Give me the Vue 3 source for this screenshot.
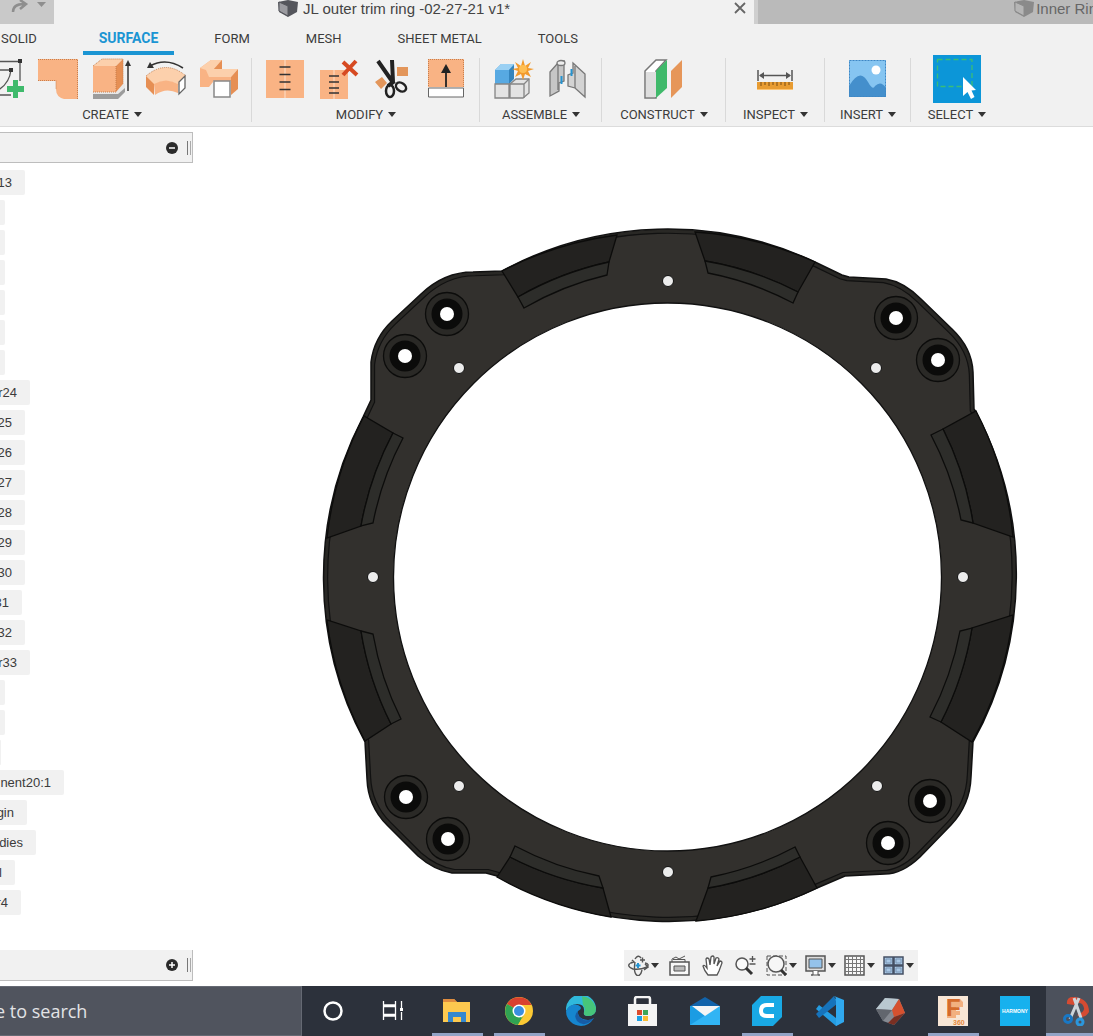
<script setup>
const menus = ['SOLID', 'SURFACE', 'FORM', 'MESH', 'SHEET METAL', 'TOOLS']

const groups = [
  { name: 'CREATE', icons: ['sketch', 'patch', 'extrude', 'revolve', 'loft'] },
  { name: 'MODIFY', icons: ['stitch', 'unstitch', 'trim', 'extend'] },
  { name: 'ASSEMBLE', icons: ['component', 'joint'] },
  { name: 'CONSTRUCT', icons: ['plane'] },
  { name: 'INSPECT', icons: ['measure'] },
  { name: 'INSERT', icons: ['picture'] },
  { name: 'SELECT', icons: ['select'] },
]

const toolIcons = {
  sketch: '<g fill="none" stroke="#555" stroke-width="1.3"><path d="M10 2.500H36V22M10 36H27M12 11H27Q25 27 10 33"/></g><path d="M34 0h4v4h-4zM25 9h4v4h-4z" fill="#333"/><path d="M29 21h5v6h6v6h-6v6h-5v-6h-6v-6h6z" fill="#3fba6c"/>',
  patch: '<path d="M0 0H40V40H26Q18 38 18 30V22H0Z" fill="#f9b384"/><path d="M0 .5H39.500V40M0 21.500H18V30" fill="none" stroke="#c87f4d" stroke-dasharray="1 1"/>',
  extrude: '<path d="M1 34v6h25l7-7v-6l-7 7z" fill="#9c9c9c"/><path d="M1 31v4h25l7-6v-4z" fill="#e8e8e8"/><path d="M1 7H24V33H1z" fill="#f9b384"/><path d="M1 7L10 0H31L24 7z" fill="#fcd0ac"/><path d="M24 7L31 0V25L24 33z" fill="#e68f54"/><path d="M24 7V33H1M1 7L10 0H31V25" fill="none" stroke="#c87f4d" stroke-dasharray="1 1"/><path d="M36 32V4" stroke="#333" stroke-width="1.500"/><path d="M33 7L36 1L39 7z" fill="#333"/>',
  revolve: '<path d="M0 17Q20 0 40 17L33 26Q20 18 8 26z" fill="#fcd0ac"/><path d="M8 25Q20 18 32 25V34Q20 28 9 36z" fill="#f9b384"/><path d="M0 17L8 25V36L0 28z" fill="#e68f54"/><path d="M0 17Q20 0 40 17" fill="none" stroke="#c87f4d" stroke-dasharray="1 1"/><path d="M33 23L39 17V29L33 35z" fill="#fff" stroke="#666" stroke-width="1.300"/><path d="M4 7Q20-2 37 9" fill="none" stroke="#333" stroke-width="1.500"/><path d="M1 9L4 3L8 9z" fill="#333"/>',
  loft: '<path d="M0 9L11 1H22V11L13 19V23L9 28H0z" fill="#f9b384"/><path d="M0 9L11 1H22L14 10H38L31 18H9L6 11z" fill="#fcd0ac"/><path d="M14 10L22 1V10z" fill="#e68f54"/><path d="M31 18L38 10V30L31 36z" fill="#e68f54"/><path d="M13 18H31V22H13z" fill="#f9b384"/><rect x="14" y="22" width="16" height="16" fill="#fff" stroke="#888" stroke-width="1.500"/>',
  stitch: '<path d="M1 1H39V39H1z" fill="#f9b384"/><path d="M20 1V39" stroke="#fde0ca"/><path d="M14.500 8h11M14.500 15.500h11M14.500 23h11M14.500 30.500h11" stroke="#333" stroke-width="1.500"/>',
  unstitch: '<path d="M1 11H29V40H1z" fill="#f9b384"/><path d="M15 11V40" stroke="#fde0ca"/><path d="M10 17h10M10 23h10M10 29h10M10 34h10" stroke="#333" stroke-width="1.500"/><path d="M24 3L38 16M37 2L24 16" stroke="#d64a22" stroke-width="4"/>',
  trim: '<path d="M24 8h11v9H24zM2 23l7-5 5 6-6 6z" fill="#e3965b"/><path d="M5 2L21 25M19 1L20 23L15 27" fill="none" stroke="#222" stroke-width="4"/><g fill="none" stroke="#222" stroke-width="2.500"><ellipse cx="17" cy="32" rx="4" ry="6"/><ellipse cx="28" cy="28" rx="5.500" ry="4" transform="rotate(35 28 28)"/></g>',
  extend: '<path d="M1 0H37V28H1z" fill="#f9b384"/><path d="M1 .5H36.500V28M1.500 0V28" fill="none" stroke="#c87f4d" stroke-dasharray="1 1"/><path d="M1.500 29H36.500V38H1.500z" fill="#fff" stroke="#666"/><path d="M19 28V8" stroke="#222" stroke-width="1.800"/><path d="M14 14L19 5L24 14z" fill="#222"/>',
  component: '<path d="M1 11L7 5H20V19L15 25H1z" fill="#57a9e2"/><path d="M1 11L7 5H20L15 11z" fill="#9ad0f3"/><path d="M15 11V25L20 20V6z" fill="#3484bd"/><path d="M1 25H15V39H1zM16 25L22 20H35V34L29 39H16z" fill="#e3e3e3" stroke="#858585" stroke-width="1.300"/><path d="M15 25H30V39M30 25L35 20" fill="none" stroke="#858585" stroke-width="1.300"/><path d="M29 0l2 7 6-4-3 6 6 1-6 2 3 6-6-3-2 6-2-6-6 3 3-6-6-2 6-1-3-6 6 4z" fill="#f29a2c"/><circle cx="29" cy="10" r="4" fill="#ffbe52"/>',
  joint: '<g stroke="#777" stroke-width="1.300"><path d="M2 13L9 5L16 2V22L11 24V32L2 37z" fill="#c6c6c6"/><ellipse cx="13" cy="4" rx="4" ry="2.500" fill="#eee"/><path d="M10 6V31" fill="none"/><path d="M25 4L37 15V38L27 29L20 27V16L25 14z" fill="#d3d3d3"/><path d="M27 7V29" fill="none"/></g><path d="M13.500 17V25M23.500 10V17" stroke="#2494d2" stroke-width="2"/>',
  plane: '<path d="M1 12L12 1H22L12 12V39H1z" fill="#fff" stroke="#777" stroke-width="1.500"/><path d="M2 13H12V38H2z" fill="#dedede"/><path d="M12 12L23 1V29L12 39z" fill="#3fb96a"/><path d="M27 12L38 1V28L27 39z" fill="#e69659"/>',
  measure: '<path d="M2 11V22M36 11V22" stroke="#555" stroke-width="1.500"/><path d="M4 16.500H34" stroke="#555" stroke-width="1.500"/><path d="M3 16.500L8 13V20zM35 16.500L30 13V20z" fill="#555"/><path d="M1 23H37V31H1z" fill="#e89c32"/><path d="M5 23v4M9 23v3M13 23v4M17 23v3M21 23v4M25 23v3M29 23v4M33 23v3" stroke="#7a4c12"/><path d="M1 30.500H37" stroke="#fcc575"/>',
  picture: '<path d="M1 1H38V38H1z" fill="#86c5f1"/><path d="M1 27Q12 8 20 23Q25 32 27 27Q33 21 38 29V38H1z" fill="#448fcc"/><circle cx="28" cy="11" r="4.500" fill="#fff"/><path d="M1.500 1.500H37.500V37.500H1.500z" fill="none" stroke="#3f87c4" stroke-dasharray="2 1"/>',
  select: '<path d="M-4-4H44V44H-4z" fill="#0c96d8"/><path d="M.5 .5H35V27.500H.5z" fill="none" stroke="#39bd78" stroke-width="1.300" stroke-dasharray="5 3"/><path d="M26 18V37L30.500 33L34 40L37.500 38L34.500 31.500L39 31z" fill="#fff"/>',
}

// Browser tree rows: label and the width of the chip that is in view
const tree = [
  { label: '13', width: 25 },
  { label: '', width: 5 }, { label: '', width: 5 }, { label: '', width: 5 },
  { label: '', width: 5 }, { label: '', width: 5 }, { label: '', width: 5 },
  { label: 'r24', width: 30 }, { label: '25', width: 25 }, { label: '26', width: 25 },
  { label: '27', width: 25 }, { label: '28', width: 25 }, { label: '29', width: 25 },
  { label: '30', width: 25 }, { label: '31', width: 22 }, { label: '32', width: 25 },
  { label: 'r33', width: 30 },
  { label: '', width: 5 }, { label: '', width: 5 }, { label: '', width: 1 },
  { label: 'nent20:1', width: 64 }, { label: 'gin', width: 27 }, { label: 'dies', width: 36 },
  { label: 'l', width: 15 }, { label: 'r4', width: 21 },
]

const outline = 'M502 271A346.500 346.500 0 0 1 815 262L842 275L849 277L886 279Q904 282 921 299L952 329Q972 348 973 372L974 409L976 412A346.500 346.500 0 0 1 973 742L971 777Q970 805 951 825L920 857Q902 874 885 874L845 876L817 888A346.500 346.500 0 0 1 497 876L486 873L452 873Q434 870 418 856L387 825Q368 806 367 779L365 742A346.500 346.500 0 0 1 363 417L371 400L371 362Q374 338 392 321L421 294Q444 272 473 272Z'

// Each pocket: two outer corners, the step line between them, and the floor corners
const pockets = [
  { out: [502, 271, 617, 235], step: [609, 262, 518, 297], floor: [607, 275, 524, 308] },
  { out: [695, 232, 815, 262], step: [798, 292, 705, 261], floor: [793, 303, 708, 273] },
  { out: [976, 411, 1013, 537], step: [973, 523, 943, 429], floor: [961, 520, 931, 435] },
  { out: [1013, 615, 972, 742], step: [941, 722, 972, 628], floor: [930, 717, 960, 631] },
  { out: [817, 888, 696, 921], step: [708, 888, 800, 857], floor: [711, 877, 795, 847] },
  { out: [611, 917, 497, 877], step: [510, 857, 603, 888], floor: [515, 846, 599, 876] },
  { out: [365, 741, 327, 620], step: [361, 631, 391, 724], floor: [373, 634, 401, 719] },
  { out: [327, 538, 364, 416], step: [393, 433, 361, 526], floor: [403, 438, 373, 523] },
]
const wall = (p) => {
  const [a, b, c, d] = p.out, [e, f, g, h] = p.step
  return `M${a} ${b}A346.5 346.5 0 0 1 ${c} ${d}L${e} ${f}A317 317 0 0 0 ${g} ${h}Z`
}
const floor = (p) => {
  const [a, b, c, d] = p.step, [e, f, g, h] = p.floor
  return `M${a} ${b}L${e} ${f}A305 305 0 0 0 ${g} ${h}L${c} ${d}A317 317 0 0 1 ${a} ${b}Z`
}
const bolts = [[447, 314], [405, 356], [896, 318], [938, 360], [406, 797], [448, 839], [930, 801], [888, 843]]
const pins = [[668, 281], [876, 368], [963, 577], [877, 786], [668, 872], [459, 786], [373, 577], [459, 368]]

const views = [
  { name: 'Orbit', arrow: true, art: '<g fill="none" stroke="#555" stroke-width="1.400"><path d="M7 4Q10-1 13 3M7 7Q5 19 10 21Q13 20 14 15M4 7Q-3 11 5 14Q12 15 19 12Q22 9 17 8M12 5h5M14.500 2.500v5M4 5l2 2-3 1M16 15l4-3-3-3"/></g><path d="M10 8v5M7.500 10.500h5" stroke="#2494d2" stroke-width="2"/>' },
  { name: 'Look at', art: '<path d="M1 7H20V20H1z" fill="#f8f8f8" stroke="#555" stroke-width="1.500"/><path d="M5 11H16V16H5z" fill="#bbb" stroke="#555"/><path d="M3 7V4L7 2L10 4L16 1M4 4.500H16V7" stroke="#555" fill="none"/>' },
  { name: 'Pan', art: '<path d="M6 20Q2 15 1 11Q2 9 5 13L4 4Q5 2 7 4L8 10L9 2Q11 0 12 2V9L14 3Q16 2 17 4L15 11L18 6Q20 6 20 8L17 16L15 20z" fill="#fff" stroke="#555" stroke-width="1.300"/>' },
  { name: 'Zoom', art: '<circle cx="7" cy="9" r="6" fill="#fafafa" stroke="#555" stroke-width="1.500"/><path d="M11 13L17 19" stroke="#333" stroke-width="3"/><path d="M17.500 1v6M14.500 4h6M14.500 9h6" stroke="#555" stroke-width="1.300"/>' },
  { name: 'Fit', arrow: true, art: '<path d="M1 1H20V20H1z" fill="none" stroke="#555" stroke-dasharray="4 2"/><circle cx="10" cy="9" r="8" fill="#f6f6f6" stroke="#555" stroke-width="1.500"/><path d="M15 15L20 20" stroke="#333" stroke-width="3"/>' },
  { name: 'Display settings', arrow: true, art: '<path d="M1 1H20V16H1z" fill="#ddd" stroke="#555" stroke-width="1.500"/><path d="M4 4H17V13H4z" fill="#94c2ea" stroke="#555"/><path d="M8 16V20H6H15H13V16" fill="#fff" stroke="#555"/>' },
  { name: 'Grid and snaps', arrow: true, art: '<path d="M1 1H20V20H1z" fill="#f8f8f8" stroke="#555" stroke-width="1.500"/><path d="M4.500 1V20M8.500 1V20M12.500 1V20M16.500 1V20M1 4.500H20M1 8.500H20M1 12.500H20M1 16.500H20" stroke="#777"/>' },
  { name: 'Viewports', arrow: true, art: '<path d="M1 2H10V10H1zM11 2H20V10H11zM1 11H10V19H1zM11 11H20V19H11z" fill="#a9c8e6" stroke="#455064" stroke-width="1.500"/><path d="M3 4H8V8H3zM13 4H18V8H13zM3 13H8V17H3zM13 13H18V17H13z" fill="none" stroke="#7d97b5"/>' },
]

const apps = [
  { name: 'Cortana', art: '<circle cx="15" cy="15" r="8.500" fill="none" stroke="#fff" stroke-width="2.500"/>' },
  { name: 'Task View', art: '<path d="M3.500 5v4h12V5M3.500 24v-4h12v4M3.500 10.500h12v8h-12zM21.500 5v7M21.500 16v8" fill="none" stroke="#fff" stroke-width="1.300"/><path d="M20 12h3v3h-3z" fill="#fff"/>' },
  { name: 'File Explorer', running: true, art: '<path d="M1 3h11l3 3h13v20H1z" fill="#fdc94f"/><path d="M1 3h11l3 3H1z" fill="#df8c3f"/><path d="M6 16h18v10h-5v-5h-8v5H6z" fill="#3488cf"/>' },
  { name: 'Chrome', running: true, art: '<circle cx="15" cy="15" r="14" fill="#fcc934"/><path d="M15 15L3 8A14 14 0 0 1 27.500 9H15z" fill="#d9412f"/><path d="M15 15L3 8A14 14 0 0 0 14 29L20 19z" fill="#30a353"/><path d="M15 15H22L14 29Q19 29 20 28z" fill="#fcc934"/><circle cx="15" cy="15" r="6.500" fill="#fff"/><circle cx="15" cy="15" r="5" fill="#3a8fe0"/>' },
  { name: 'Edge', art: '<path d="M0 15A15 15 0 0 1 30 12Q30 20 22 20Q17 20 18 16Q19 8 11 8Q3 9 0 15z" fill="#30b9dc"/><path d="M16 .2A15 15 0 0 1 30 12Q30 20 22 20Q17 20 18 16Q20 12 17 9z" fill="#47c57a"/><path d="M0 15Q4 7 12 9Q18 12 12 15Q11 23 22 24Q26 24 28 22Q23 30 15 30A15 15 0 0 1 0 15z" fill="#1686cf"/><path d="M12 15Q7 19 11 25Q16 30 22 27Q26 25 28 22Q23 25 18 24Q11 21 12 15z" fill="#175ca5"/>' },
  { name: 'Store', art: '<path d="M0 8H29V30H0z" fill="#f4f4f4"/><path d="M7 8V3Q7 1 9 1H20Q22 1 22 3V8" fill="none" stroke="#f4f4f4" stroke-width="2.500"/><path d="M9 14h5v5H9z" fill="#da4b2d"/><path d="M15 14h5v5h-5z" fill="#3da657"/><path d="M9 20h5v5H9z" fill="#1aa0e5"/><path d="M15 20h5v5h-5z" fill="#f9bd32"/>' },
  { name: 'Mail', art: '<path d="M0 10L15 1L30 10V18H0z" fill="#1263aa"/><path d="M0 10H30V29H0z" fill="#1b9ce3"/><path d="M0 29L30 10V29z" fill="#31b4f4"/><path d="M2 10H30L15 20z" fill="#f5f5f5"/>' },
  { name: 'Cura', running: true, art: '<path d="M9 0H30V21L21 30H0V9z" fill="#19a9e5"/><path d="M22 9H15Q9 9 9 15Q9 20 15 20H22" fill="none" stroke="#fff" stroke-width="4"/>' },
  { name: 'Visual Studio Code', art: '<path d="M20 2L30 6V25L22 30L2 13L5 9L22 22V8z" fill="#249ce2"/><path d="M20 0L2 18L5 22L23 8z" fill="#1673bb"/><path d="M20 0L30 4V26L22 30V2z" fill="#30a8ee"/>' },
  { name: 'Mesh viewer', art: '<path d="M9 2L23 3L29 17L18 29L7 25L0 13z" fill="#858991"/><path d="M9 2L23 3L16 14L0 13z" fill="#b9c8d0"/><path d="M23 3L29 17L18 21L16 14z" fill="#d6512f"/><path d="M0 13L16 14L7 25z" fill="#62666e"/><path d="M18 21L29 17L18 29L12 27z" fill="#7a2f22"/>' },
  { name: 'Fusion 360', running: true, art: '<path d="M0 0H30V30H0z" fill="#f8e6d6"/><path d="M9 3H22L25 6V11H18V15H22V19H18V22H9z" fill="#f2b080"/><text x="8" y="20" font-family="Liberation Sans, sans-serif" font-size="24" font-weight="700" fill="#d56a2b">F</text><text x="15" y="29" font-family="Liberation Sans, sans-serif" font-size="7" font-weight="700" fill="#e58a3e">360</text>' },
  { name: 'Harmony', art: '<path d="M0 0H30V30H0z" fill="#17b1ee"/><text x="15" y="17" text-anchor="middle" font-family="Liberation Sans, sans-serif" font-size="5" font-weight="700" fill="#fff">HARMONY</text>' },
  { name: 'Snip', running: true, active: true, art: '<path d="M5 8Q4 0 13 1Q27 3 27 16Q22 24 15 19Q26 15 20 8Q15 5 12 9z" fill="#d64b32"/><path d="M12 2L19 22M17 2L8 23" stroke="#cdd4da" stroke-width="3"/><circle cx="6" cy="23" r="3.500" fill="none" stroke="#1878c6" stroke-width="3"/><circle cx="18" cy="26" r="3" fill="none" stroke="#2b97dd" stroke-width="3"/>' },
]
</script>

<template>
  <div class="app">
    <header>
      <div class="tabstrip">
        <button class="redo" aria-label="Redo">
          <svg width="40" height="24" viewBox="0 0 40 24"><path d="M6 12Q6 4 17 4M13 0L19 4L13 9" fill="none" stroke="#8e8e8e" stroke-width="2.500" /><path d="M30 2h9l-4.500 5z" fill="#8e8e8e" /></svg>
        </button>
        <div class="doc">
          <span class="doc-name">
            <svg width="20" height="18" viewBox="0 0 20 18"><path d="M0 2L10 0L20 2L19 12L10 17L1 12z" fill="#55565c" /><path d="M1 2L10 6V16L1 11z" fill="#9b9ba0" stroke="#55565c" /></svg>
            JL outer trim ring -02-27-21 v1*
          </span>
          <button class="close" aria-label="Close tab">
            <svg width="12" height="12" viewBox="0 0 12 12"><path d="M1 1L11 11M11 1L1 11" stroke="#666" stroke-width="1.800" /></svg>
          </button>
        </div>
        <div class="doc-next">
          <svg width="20" height="18" viewBox="0 0 20 18"><path d="M0 2L10 0L20 2L19 12L10 17L1 12z" fill="#8a8a8a" /><path d="M1 2L10 6V16L1 11z" fill="#b5b5b5" stroke="#8a8a8a" /></svg>
          Inner Ring
        </div>
      </div>

      <nav class="menus">
        <a v-for="m in menus" :key="m" href="#" :class="{ current: m === 'SURFACE' }">{{ m }}</a>
      </nav>

      <div class="ribbon">
        <section v-for="g in groups" :key="g.name" class="group">
          <div class="tools">
            <button v-for="i in g.icons" :key="i" :aria-label="i">
              <svg width="40" height="40" viewBox="0 0 40 40" v-html="toolIcons[i]"></svg>
            </button>
          </div>
          <button class="group-name">{{ g.name }}<i class="arrow"></i></button>
        </section>
      </div>
    </header>

    <main>
      <svg class="canvas" viewBox="0 127 1093 859" role="img" aria-label="Trim ring model">
        <path :d="outline" fill="#292825" stroke="#111" stroke-width="1.500" />
        <path :d="outline" fill="#32302d" stroke="#111" stroke-width="1.200" transform="translate(8 7) scale(.988)" />
        <g stroke="#0c0c0b" stroke-width="1.300">
          <template v-for="(p, n) in pockets" :key="n">
            <path :d="wall(p)" fill="#232220" />
            <path :d="floor(p)" fill="#2d2d2a" />
          </template>
        </g>
        <circle cx="667.500" cy="577" r="274" fill="#fff" stroke="#111" stroke-width="1.300" />
        <g v-for="([x, y], n) in bolts" :key="'b' + n">
          <circle :cx="x" :cy="y" r="21.500" fill="#2a2926" stroke="#0c0c0b" stroke-width="1.300" />
          <circle :cx="x" :cy="y" r="15.500" fill="#0b0b0a" />
          <circle :cx="x" :cy="y" r="7" fill="#fff" />
        </g>
        <circle v-for="([x, y], n) in pins" :key="'p' + n" :cx="x" :cy="y" r="5.500" fill="#ececec" stroke="#111" />
      </svg>

      <div class="panel browser-head">
        <button aria-label="Collapse browser"><svg width="12" height="12" viewBox="0 0 12 12"><circle cx="6" cy="6" r="6" fill="#2b2b2b" /><path d="M3 6h6" stroke="#fff" stroke-width="1.500" /></svg></button>
        <i class="grip"></i>
      </div>
      <ul class="tree">
        <li v-for="(row, n) in tree" :key="n" :style="{ width: row.width + 'px' }">{{ row.label }}</li>
      </ul>

      <div class="foot">
        <div class="panel comments">
          <button aria-label="Expand comments"><svg width="12" height="12" viewBox="0 0 12 12"><circle cx="6" cy="6" r="6" fill="#2b2b2b" /><path d="M3 6h6M6 3v6" stroke="#fff" stroke-width="1.500" /></svg></button>
          <i class="grip"></i>
        </div>
        <div class="views">
          <button v-for="v in views" :key="v.name" :aria-label="v.name" :class="{ plain: !v.arrow }">
            <svg width="21" height="21" viewBox="0 0 21 21" v-html="v.art"></svg>
            <i v-if="v.arrow" class="arrow"></i>
          </button>
        </div>
      </div>
    </main>

    <footer>
      <div class="search"><input type="text" aria-label="Search" placeholder="e to search" /></div>
      <button v-for="a in apps" :key="a.name" :aria-label="a.name" :class="{ running: a.running, active: a.active }">
        <svg width="30" height="30" viewBox="0 0 30 30" v-html="a.art"></svg>
      </button>
    </footer>
  </div>
</template>

<style>
body { margin: 0; background: #fff; }
</style>

<style scoped>
.app {
  display: flex;
  flex-direction: column;
  min-height: 100vh;
  overflow: hidden;
  font-family: Roboto, "Liberation Sans", sans-serif;
  font-size: 13px;
  color: #3c3c3c;
}
button {
  padding: 0;
  border: 0;
  background: none;
  font: inherit;
  color: inherit;
}
svg { display: block; flex: none; }
header {
  background: #f1f1f1;
  border-bottom: 1px solid #dcdcdc;
}

.tabstrip {
  display: flex;
  height: 24px;
  font-family: "Liberation Sans", sans-serif;
  font-size: 15px;
  line-height: 17px;
  color: #444;
}
.redo {
  flex: none;
  width: 54px;
  padding-left: 7px;
  background: #c9c9c9;
}
.doc {
  display: flex;
  flex: 704 1 0;
  justify-content: space-between;
  align-items: flex-start;
  min-width: 0;
}
.doc-name {
  display: flex;
  gap: 5px;
  margin-left: 32%;
  white-space: nowrap;
}
.close { margin: 2px 8px 0 0; }
.doc-next {
  display: flex;
  gap: 2px;
  box-sizing: border-box;
  width: 31%;
  padding-left: 256px;
  overflow: hidden;
  border-left: 4px solid #cfcfcf;
  background: #bababa;
  color: #666;
  white-space: nowrap;
}

.menus {
  display: flex;
  gap: 24px;
  height: 31px;
}
.menus a {
  box-sizing: border-box;
  padding: 0 16px;
  border-bottom: 4px solid transparent;
  line-height: 29px;
  color: inherit;
  text-decoration: none;
  white-space: nowrap;
}
.menus a:first-child {
  padding-left: 1px;
  margin-right: 6px;
}
.menus a.current {
  border-color: #1b95d3;
  font-size: 14px;
  font-weight: 700;
  color: #1b95d3;
}

.ribbon {
  display: grid;
  grid-template-columns: 252px 228px 122px 124px 99px 86px 92px;
  height: 71px;
}
.group {
  position: relative;
  display: flex;
  flex-direction: column;
  align-items: center;
}
.group:first-child { margin-left: -28px; }
.group:not(:last-child)::after {
  content: "";
  position: absolute;
  top: 3px;
  right: 0;
  bottom: 4px;
  width: 1px;
  background: #d9d9d9;
}
.tools {
  display: flex;
  gap: 14px;
  height: 48px;
  align-items: center;
}
.tools svg { overflow: visible; }
.group-name {
  display: flex;
  gap: 5px;
  align-items: center;
  height: 23px;
}
.arrow {
  width: 0;
  border: 4px solid transparent;
  border-top: 5px solid #333;
  border-bottom: 0;
}

main {
  position: relative;
  display: flex;
  flex: 1;
  flex-direction: column;
  padding: 5px 0;
}
.canvas {
  position: absolute;
  inset: 0;
  width: 100%;
  height: 100%;
}
.panel {
  position: relative;
  display: flex;
  gap: 9px;
  justify-content: flex-end;
  align-items: center;
  box-sizing: border-box;
  width: 193px;
  height: 31px;
  padding-right: 1px;
  border: 1px solid #bdbdbd;
  border-left: 0;
  background: #f1f1f1;
}
.comments { border-top: 0; }
.grip {
  width: 2px;
  height: 14px;
  border-left: 1px solid #777;
  border-right: 1px solid #aaa;
}
.tree {
  position: relative;
  display: flex;
  flex: 1;
  flex-direction: column;
  gap: 5px;
  align-self: flex-start;
  margin: 0;
  padding: 7px 0 0;
  list-style: none;
  font-family: "Liberation Sans", sans-serif;
}
.tree li {
  display: flex;
  justify-content: flex-end;
  box-sizing: border-box;
  height: 25px;
  padding-right: 13px;
  overflow: hidden;
  border-radius: 0 2px 2px 0;
  background: #f1f1f1;
  line-height: 25px;
  white-space: nowrap;
}
.tree li:empty { padding: 0; }
.foot {
  position: relative;
  display: flex;
  justify-content: space-between;
}
.views {
  display: flex;
  gap: 8px;
  align-items: center;
  margin-right: 16%;
  padding: 0 4px;
  background: #f1f1f1;
}
.views button {
  display: flex;
  gap: 2px;
  align-items: center;
}
.views .plain { padding: 0 2px; }

footer {
  display: flex;
  height: 50px;
  background: #2c313b;
}
.search {
  box-sizing: border-box;
  flex: none;
  width: 302px;
  border: 1px solid #656973;
  border-left: 0;
  background: #50545e;
}
.search input {
  box-sizing: border-box;
  width: 100%;
  height: 100%;
  margin-left: -5px;
  padding: 0;
  border: 0;
  outline: 0;
  background: none;
  font: 18px "Open Sans", sans-serif;
}
.search input::placeholder { color: #e2e3e6; opacity: 1; }
footer button {
  position: relative;
  display: flex;
  flex: none;
  justify-content: center;
  align-items: center;
  width: 62px;
}
footer .running::after {
  content: "";
  position: absolute;
  right: 5px;
  bottom: 0;
  left: 6px;
  height: 3px;
  background: #92a3c6;
}
footer .active { background: #4c515c; }
footer .active::after { left: 0; right: 0; }
</style>
